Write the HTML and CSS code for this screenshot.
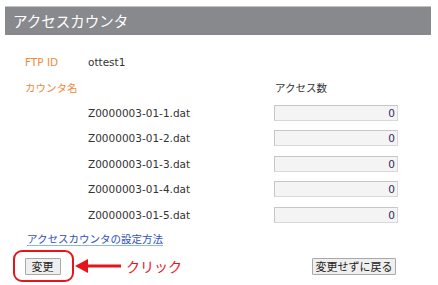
FILE: index.html
```html
<!DOCTYPE html>
<html lang="ja">
<head>
  <meta charset="UTF-8" />
  <meta name="viewport" content="width=device-width, initial-scale=1.0"/>
  <title>アクセスカウンタ</title>
  <link rel="stylesheet" href="styles.css">
</head>
<body>
  <h1 class="page-title">アクセスカウンタ</h1>

  <div class="counter-table">
    <span class="label">FTP ID</span>
    <span class="value">ottest1</span>
    <span></span>

    <span class="label">カウンタ名</span>
    <span></span>
    <span class="col-head">アクセス数</span>

    <span></span>
    <span class="file">Z0000003-01-1.dat</span>
    <input class="count" type="text" value="0" readonly />

    <span></span>
    <span class="file">Z0000003-01-2.dat</span>
    <input class="count" type="text" value="0" readonly />

    <span></span>
    <span class="file">Z0000003-01-3.dat</span>
    <input class="count" type="text" value="0" readonly />

    <span></span>
    <span class="file">Z0000003-01-4.dat</span>
    <input class="count" type="text" value="0" readonly />

    <span></span>
    <span class="file">Z0000003-01-5.dat</span>
    <input class="count" type="text" value="0" readonly />
  </div>

  <div class="help-row">
    <a class="help-link" href="#">アクセスカウンタの設定方法</a>
  </div>

  <div class="actions">
    <div class="highlight">
      <button class="btn" type="button">変更</button>
    </div>
    <svg class="arrow" width="46" height="16" viewBox="0 0 46 16">
      <polygon points="0,8 13,1 13,15" fill="#e8141b"/>
      <rect x="12" y="6.5" width="34" height="3" fill="#e8141b"/>
    </svg>
    <span class="note">クリック</span>
    <button class="btn btn-back" type="button">変更せずに戻る</button>
  </div>
</body>
</html>
```

FILE: styles.css
```css
body {
  margin: 0;
  padding: 0;
  background-color: #fff;
  color: #333;
  font-family: "DejaVu Sans", "Noto Sans CJK JP", sans-serif;
  font-size: 10.5px;
}

.page-title {
  margin: 6px 7px 0 5px;
  height: 29px;
  padding-left: 8px;
  background-color: #88898d;
  border-top: 1px solid #c4c4c6;
  box-sizing: border-box;
  color: #fff;
  font-family: "Noto Sans CJK JP", sans-serif;
  font-size: 14.5px;
  font-weight: normal;
  line-height: 27px;
}

.counter-table {
  display: grid;
  grid-template-columns: 63px 186px 124px;
  grid-auto-rows: 25.5px;
  align-items: center;
  margin: 14px 0 0 25px;
}

.label {
  color: #ef8a3e;
}

.value,
.file,
.col-head {
  color: #333;
}

.col-head {
  padding-left: 1px;
}

.count {
  width: 124px;
  height: 16px;
  box-sizing: border-box;
  margin: 0;
  padding: 0 2px;
  border: 1px solid #d8d8d8;
  border-top-color: #c6c6c6;
  border-left-color: #c6c6c6;
  background-color: #f4f4f4;
  color: #3a2a5a;
  font-family: "DejaVu Sans", sans-serif;
  font-size: 10.5px;
  text-align: right;
}

.help-row {
  height: 22.5px;
  line-height: 22px;
  padding-left: 27px;
}

.help-link {
  color: #3050c0;
  text-decoration: none;
  border-bottom: 1px solid #8cb8e6;
}

.actions {
  display: flex;
  align-items: center;
  height: 32px;
  padding: 0 42px 0 13px;
}

.highlight {
  display: flex;
  align-items: center;
  justify-content: center;
  width: 61px;
  height: 32px;
  box-sizing: border-box;
  border: 2px solid #e8141b;
  border-radius: 9px;
  padding-right: 2px;
}

.btn {
  height: 17px;
  margin: 0;
  padding: 0 6px;
  border: 1px solid #a9a9a9;
  border-radius: 1px;
  background-color: #efefef;
  color: #222;
  font-family: "Noto Sans CJK JP", sans-serif;
  font-size: 11px;
  line-height: 14px;
}

.arrow {
  margin-left: 1px;
}

.note {
  margin-left: 5px;
  color: #e8141b;
  font-family: "Noto Sans CJK JP", sans-serif;
  font-size: 14px;
}

.btn-back {
  margin-left: auto;
  width: 84px;
  padding: 0;
}
```
